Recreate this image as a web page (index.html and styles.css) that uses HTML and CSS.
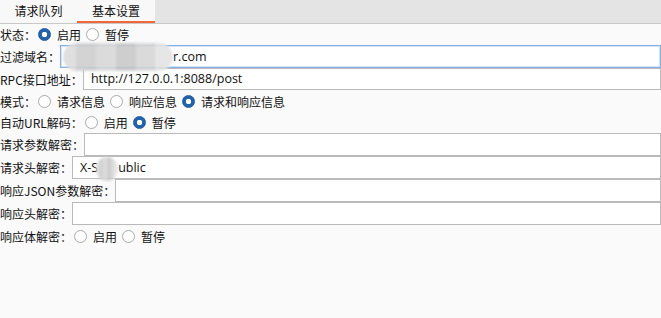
FILE: index.html
```html
<!DOCTYPE html>
<html lang="zh-CN">
<head>
  <meta charset="UTF-8">
  <title>基本设置</title>
  <link rel="stylesheet" href="styles.css">
</head>
<body>
  <div class="tabbar">
    <div class="tabs">
      <div class="tab">请求队列</div>
      <div class="tab active">基本设置</div>
    </div>
  </div>

  <div class="form">
    <div class="row radio-row short">
      <span class="label">状态：</span>
      <span class="radio checked"></span><span class="opt">启用</span>
      <span class="radio"></span><span class="opt">暂停</span>
    </div>

    <div class="row field-row">
      <span class="label">过滤域名：</span>
      <div class="field focused"><span class="redact wide"></span>r.com</div>
    </div>

    <div class="row field-row tight">
      <span class="label">RPC接口地址：</span>
      <div class="field">http://127.0.0.1:8088/post</div>
    </div>

    <div class="row radio-row">
      <span class="label">模式：</span>
      <span class="radio"></span><span class="opt">请求信息</span>
      <span class="radio"></span><span class="opt">响应信息</span>
      <span class="radio checked"></span><span class="opt">请求和响应信息</span>
    </div>

    <div class="row radio-row short">
      <span class="label">自动URL解码：</span>
      <span class="radio"></span><span class="opt">启用</span>
      <span class="radio checked"></span><span class="opt">暂停</span>
    </div>

    <div class="row field-row">
      <span class="label">请求参数解密：</span>
      <div class="field"></div>
    </div>

    <div class="row field-row">
      <span class="label">请求头解密：</span>
      <div class="field">X-S<span class="redact small"></span>ublic</div>
    </div>

    <div class="row field-row">
      <span class="label">响应JSON参数解密：</span>
      <div class="field"></div>
    </div>

    <div class="row field-row">
      <span class="label">响应头解密：</span>
      <div class="field"></div>
    </div>

    <div class="row radio-row">
      <span class="label">响应体解密：</span>
      <span class="radio"></span><span class="opt">启用</span>
      <span class="radio"></span><span class="opt">暂停</span>
    </div>
  </div>
</body>
</html>
```

FILE: styles.css
```css
body {
  margin: 0;
  background: #fafafa;
  font-family: "Noto Sans CJK SC", "Noto Sans", sans-serif;
  font-size: 12px;
  color: #111;
}
.tabbar {
  height: 23px;
  background: #e4e4e4;
  border-bottom: 1px solid #c8c8c8;
}
.tabs {
  display: flex;
  width: 155px;
  height: 23px;
  background: #f8f8f8;
}
.tab {
  width: 77px;
  height: 21px;
  line-height: 21px;
  text-align: center;
  border-bottom: 2px solid transparent;
}
.tab.active {
  width: 78px;
  border-bottom-color: #f2673a;
}
.row {
  display: flex;
  align-items: center;
  white-space: nowrap;
}
.radio-row {
  height: 22px;
}
.radio-row.short {
  height: 21px;
}
.field-row {
  height: 23px;
}
.field-row.tight {
  height: 22px;
}
.label {
  flex: none;
}
.field {
  flex: 1;
  height: 21px;
  line-height: 21px;
  background: #fff;
  border: 1px solid #bababa;
  padding-left: 7px;
  font-family: "Open Sans", "Noto Sans CJK SC", sans-serif;
  font-size: 12.5px;
  color: #111;
}
.field-row.tight .field {
  height: 20px;
  line-height: 20px;
}
.field.focused {
  border-color: #84b1e2;
  box-shadow: inset 0 0 0 1px #d3e3f5;
  padding-left: 2px;
}
.radio {
  flex: none;
  width: 11px;
  height: 11px;
  border: 1px solid #a9a9a9;
  border-radius: 50%;
  background: #fff;
  margin: 0 6px 0 2px;
}
.radio.checked {
  border-color: #1f5b9f;
  background: radial-gradient(circle, #fff 0 2.5px, #2462aa 3px);
}
.opt {
  margin-right: 3px;
}
.redact {
  display: inline-block;
  vertical-align: middle;
  background: linear-gradient(90deg, #dcdcdc 0 12%, #cfcfcf 12% 30%, #d8d8d8 30% 48%, #c9c9c9 48% 66%, #d6d6d6 66% 84%, #e4e4e4 84%);
  filter: blur(1px);
  opacity: 0.9;
}
.redact.wide {
  width: 110px;
  height: 28px;
  margin: -6px 0 -4px 0;
  border-radius: 14px;
}
.redact.small {
  width: 22px;
  height: 24px;
  margin: -2px 0 -2px -2px;
  border-radius: 11px;
}
```
